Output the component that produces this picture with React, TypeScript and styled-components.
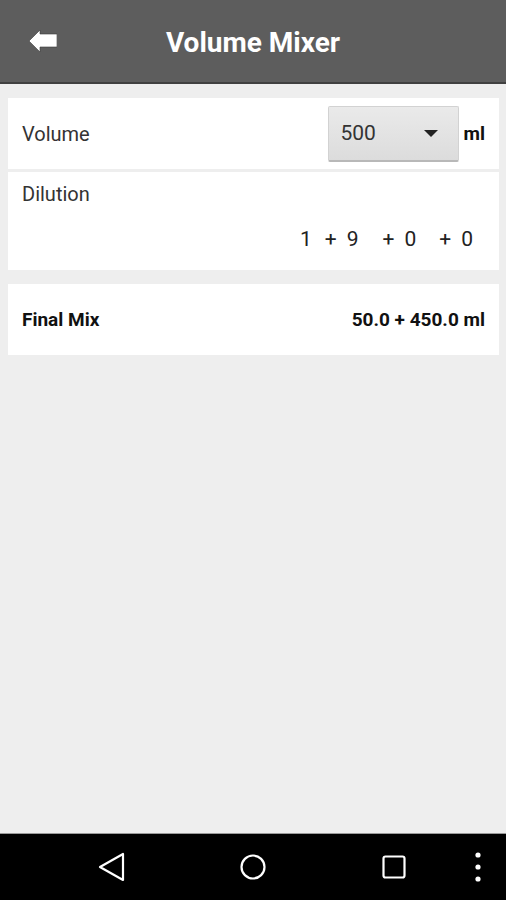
import { FunctionComponent } from "react";
import styled, { createGlobalStyle } from "styled-components";

const GlobalStyle = createGlobalStyle`
  html, body {
    margin: 0;
    padding: 0;
    background-color: #eeeeee;
  }
  body {
    font-family: Roboto, "Noto Sans", "Liberation Sans", sans-serif;
  }
`;

const Screen = styled.div`
  width: 506px;
  height: 900px;
  display: flex;
  flex-direction: column;
  background-color: #eeeeee;
  overflow: hidden;
`;

const Header = styled.header`
  height: 82px;
  flex-shrink: 0;
  display: grid;
  grid-template-columns: 1fr auto 1fr;
  align-items: center;
  background-color: #5d5d5d;
  border-bottom: 2px solid #404040;
`;

const BackButton = styled.button`
  justify-self: start;
  margin-left: 29px;
  padding: 0;
  border: none;
  background: none;
  display: flex;
  cursor: pointer;
`;

const Title = styled.h1`
  margin: 2px 0 0;
  font-size: 28px;
  font-weight: bold;
  color: #ffffff;
`;

const Content = styled.main`
  flex: 1;
  display: flex;
  flex-direction: column;
  padding: 14px 7px 0 8px;
`;

const Card = styled.section<{ $height: number; $gap: number }>`
  height: ${(p) => p.$height}px;
  margin-bottom: ${(p) => p.$gap}px;
  background-color: #ffffff;
  box-sizing: border-box;
  padding: 0 14px;
`;

const Row = styled.div`
  height: 100%;
  display: flex;
  align-items: center;
  justify-content: space-between;
`;

const Label = styled.span<{ $bold?: boolean }>`
  font-size: ${(p) => (p.$bold ? "19px" : "20px")};
  font-weight: ${(p) => (p.$bold ? "bold" : "normal")};
  color: ${(p) => (p.$bold ? "#111111" : "#333333")};
`;

const VolumeControl = styled.div`
  display: flex;
  align-items: center;
  gap: 5px;
`;

const Dropdown = styled.button`
  width: 131px;
  height: 56px;
  box-sizing: border-box;
  padding: 0 20px 0 12px;
  display: flex;
  align-items: center;
  justify-content: space-between;
  border: 1px solid #d2d2d2;
  border-bottom: 2px solid #b8b8b8;
  border-radius: 2px;
  background: linear-gradient(#eaeaea, #dcdcdc);
  font-family: inherit;
  font-size: 21px;
  color: #333333;
  cursor: pointer;
`;

const Unit = styled.span`
  font-size: 19px;
  font-weight: bold;
  color: #111111;
`;

const DilutionBody = styled.div`
  display: flex;
  flex-direction: column;
  padding-top: 10px;
`;

const Terms = styled.div`
  display: flex;
  justify-content: flex-end;
  padding: 21px 12px 0 0;
`;

const Term = styled.span<{ $space: number }>`
  display: flex;
  gap: 10px;
  margin-left: ${(p) => p.$space}px;
  font-size: 21px;
  color: #222222;
`;

const NavBar = styled.nav`
  height: 66px;
  flex-shrink: 0;
  display: grid;
  grid-template-columns: 41px 141px 141px 141px 1fr;
  align-items: center;
  background-color: #000000;
  border-top: 1px solid #9a9a9a;
`;

const NavButton = styled.button<{ $end?: boolean }>`
  justify-self: ${(p) => (p.$end ? "end" : "center")};
  margin-right: ${(p) => (p.$end ? "25px" : "0")};
  padding: 0;
  border: none;
  background: none;
  display: flex;
  cursor: pointer;
`;

const BackArrow = () => (
  <svg width="28" height="22" viewBox="0 0 28 22">
    <polygon
      points="0,11 11,0 11,4 28,4 28,17 11,17 11,22"
      fill="#ffffff"
      stroke="#3a3a3a"
      strokeWidth="0.6"
    />
  </svg>
);

const Caret = () => (
  <svg width="14" height="7" viewBox="0 0 14 7">
    <polygon points="0,0 14,0 7,7" fill="#222222" />
  </svg>
);

const terms = [
  { plus: false, value: "1", space: 0 },
  { plus: true, value: "9", space: 13 },
  { plus: true, value: "0", space: 24 },
  { plus: true, value: "0", space: 23 },
];

const App: FunctionComponent = () => {
  return (
    <Screen>
      <GlobalStyle />
      <Header>
        <BackButton aria-label="Back">
          <BackArrow />
        </BackButton>
        <Title>Volume Mixer</Title>
        <span />
      </Header>
      <Content>
        <Card $height={71} $gap={3}>
          <Row>
            <Label>Volume</Label>
            <VolumeControl>
              <Dropdown>
                <span>500</span>
                <Caret />
              </Dropdown>
              <Unit>ml</Unit>
            </VolumeControl>
          </Row>
        </Card>
        <Card $height={98} $gap={14}>
          <DilutionBody>
            <Label>Dilution</Label>
            <Terms>
              {terms.map((t, i) => (
                <Term key={i} $space={t.space}>
                  {t.plus && <span>+</span>}
                  <span>{t.value}</span>
                </Term>
              ))}
            </Terms>
          </DilutionBody>
        </Card>
        <Card $height={71} $gap={0}>
          <Row>
            <Label $bold>Final Mix</Label>
            <Label $bold>50.0 + 450.0 ml</Label>
          </Row>
        </Card>
      </Content>
      <NavBar>
        <span />
        <NavButton aria-label="Back">
          <svg width="28" height="30" viewBox="0 0 28 30">
            <polygon
              points="2,15 25,2 25,28"
              fill="none"
              stroke="#ffffff"
              strokeWidth="2.2"
              strokeLinejoin="round"
            />
          </svg>
        </NavButton>
        <NavButton aria-label="Home">
          <svg width="28" height="28" viewBox="0 0 28 28">
            <circle cx="14" cy="14" r="11.5" fill="none" stroke="#ffffff" strokeWidth="2.2" />
          </svg>
        </NavButton>
        <NavButton aria-label="Recents">
          <svg width="24" height="24" viewBox="0 0 24 24">
            <rect x="1.5" y="1.5" width="21" height="21" rx="2" fill="none" stroke="#ffffff" strokeWidth="2.2" />
          </svg>
        </NavButton>
        <NavButton $end aria-label="Menu">
          <svg width="6" height="30" viewBox="0 0 6 30">
            <circle cx="3" cy="3" r="2.6" fill="#ffffff" />
            <circle cx="3" cy="15" r="2.6" fill="#ffffff" />
            <circle cx="3" cy="27" r="2.6" fill="#ffffff" />
          </svg>
        </NavButton>
      </NavBar>
    </Screen>
  );
};

export default App;
